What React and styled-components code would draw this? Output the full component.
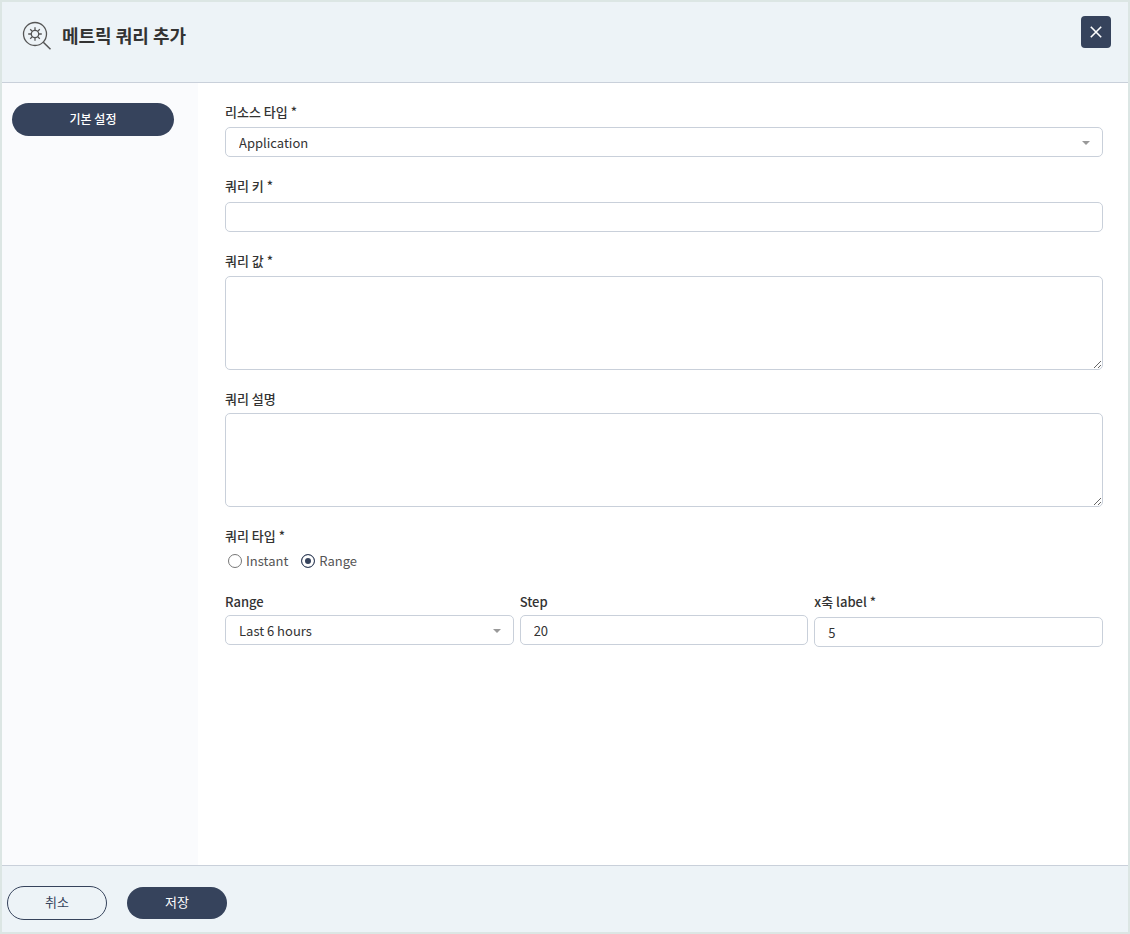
import React, { useState } from 'react'
import styled, { createGlobalStyle, ThemeProvider } from 'styled-components'

const theme = {
	color: {
		navy: '#36435c',
		text: '#333333',
		muted: '#555555',
		line: '#c9d0da',
		frame: '#dce6e4',
		bar: '#edf3f7',
		side: '#fafbfd',
		white: '#ffffff'
	}
}

const App = () => {
	const [queryType, setQueryType] = useState('Range')

	return (
		<ThemeProvider theme={theme}>
			<GlobalStyle />
			<Panel>
				<Header>
					<QueryIcon />
					<Title>메트릭 쿼리 추가</Title>
					<CloseButton type='button' aria-label='닫기'>
						<svg width='12' height='12' viewBox='0 0 12 12' fill='none' stroke='currentColor' strokeWidth='1.6'>
							<path d='M.8.8l10.4 10.4M11.2.8.8 11.2' />
						</svg>
					</CloseButton>
				</Header>
				<Body>
					<Sidebar>
						<TabButton type='button'>기본 설정</TabButton>
					</Sidebar>
					<Form id='query-form'>
						<Field $gap={5}>
							<Label htmlFor='resource'>리소스 타입 *</Label>
							<SelectBox>
								<Select id='resource' defaultValue='Application'>
									<option>Application</option>
								</Select>
								<Caret />
							</SelectBox>
						</Field>
						<Field $gap={6}>
							<Label htmlFor='key'>쿼리 키 *</Label>
							<Input id='key' />
						</Field>
						<Field $gap={5}>
							<Label htmlFor='value'>쿼리 값 *</Label>
							<TextArea id='value' />
						</Field>
						<Field $gap={4}>
							<Label htmlFor='description'>쿼리 설명</Label>
							<TextArea id='description' />
						</Field>
						<Field as='fieldset' $gap={5}>
							<Label as='legend'>쿼리 타입 *</Label>
							<Radios>
								{['Instant', 'Range'].map(type => (
									<RadioLabel key={type}>
										<Radio
											name='type'
											value={type}
											checked={queryType === type}
											onChange={() => setQueryType(type)}
										/>
										{type}
									</RadioLabel>
								))}
							</Radios>
						</Field>
						<Columns>
							<Field $gap={3}>
								<Label htmlFor='range'>Range</Label>
								<SelectBox>
									<Select id='range' defaultValue='Last 6 hours'>
										<option>Last 6 hours</option>
									</Select>
									<Caret />
								</SelectBox>
							</Field>
							<Field $gap={3}>
								<Label htmlFor='step'>Step</Label>
								<Input id='step' defaultValue='20' />
							</Field>
							<Field $gap={5}>
								<Label htmlFor='label'>x축 label *</Label>
								<Input id='label' defaultValue='5' />
							</Field>
						</Columns>
					</Form>
				</Body>
				<Footer>
					<CancelButton type='button'>취소</CancelButton>
					<SaveButton type='button'>저장</SaveButton>
				</Footer>
			</Panel>
		</ThemeProvider>
	)
}

const QueryIcon = () => (
	<svg width='30' height='30' viewBox='0 0 30 30' fill='none' stroke='#555555' strokeWidth='1.3'>
		<circle cx='13' cy='13' r='11.5' />
		<path d='M21.3 21.3l7.2 7' strokeWidth='1.5' />
		<circle cx='13' cy='13' r='3.7' />
		<path d='M13 6.2v3.1M13 16.7v3.1M6.2 13h3.1M16.7 13h3.1M8.2 8.2l2.2 2.2M15.6 15.6l2.2 2.2M17.8 8.2l-2.2 2.2M10.4 15.6l-2.2 2.2' />
	</svg>
)

const Caret = () => (
	<CaretIcon width='8' height='4' viewBox='0 0 8 4' aria-hidden='true'>
		<path d='M0 0h8L4 4z' fill='#999999' />
	</CaretIcon>
)

export default App

const GlobalStyle = createGlobalStyle`
	* {
		box-sizing: border-box;
	}

	body {
		color: ${props => props.theme.color.text};
		font-family: 'Noto Sans CJK KR', 'Noto Sans', sans-serif;
		font-size: 13px;
		margin: 0;
	}

	button, input, select, textarea {
		font-family: inherit;
	}
`

const Panel = styled.div`
	background: ${props => props.theme.color.white};
	border: 2px solid ${props => props.theme.color.frame};
	display: flex;
	flex-direction: column;
	min-height: 100vh;
`

const Header = styled.header`
	align-items: flex-start;
	background: ${props => props.theme.color.bar};
	border-bottom: 1px solid ${props => props.theme.color.line};
	display: flex;
	gap: 10px;
	padding: 14px 17px 31px 20px;

	> svg {
		margin-top: 5px;
	}
`

const Title = styled.h1`
	flex: 1;
	font-size: 18px;
	font-weight: 700;
	line-height: 26px;
	margin: 6px 0 0;
`

const CloseButton = styled.button`
	align-items: center;
	background: ${props => props.theme.color.navy};
	border: none;
	border-radius: 4px;
	color: ${props => props.theme.color.white};
	cursor: pointer;
	display: flex;
	height: 32px;
	justify-content: center;
	padding: 0;
	width: 30px;
`

const Body = styled.div`
	display: flex;
	flex: 1;
`

const Sidebar = styled.nav`
	background: ${props => props.theme.color.side};
	flex: none;
	padding: 20px 24px 20px 10px;
	width: 196px;
`

const PillButton = styled.button`
	background: ${props => props.theme.color.navy};
	border: none;
	border-radius: 17px;
	color: ${props => props.theme.color.white};
	cursor: pointer;
	padding: 0 0 3px;
`

const TabButton = styled(PillButton)`
	font-size: 12px;
	font-weight: 500;
	height: 33px;
	width: 100%;
`

const Form = styled.form`
	display: flex;
	flex: 1;
	flex-direction: column;
	gap: 19px;
	min-width: 0;
	padding: 19px 25px 20px 27px;
`

const Field = styled.div`
	border: none;
	display: flex;
	flex-direction: column;
	margin: 0;
	min-width: 0;
	padding: 0;

	> :first-child {
		margin-bottom: ${props => props.$gap}px;
	}
`

const Label = styled.label`
	font-size: 13px;
	font-weight: 500;
	line-height: 20px;
	padding: 0;
`

const Input = styled.input`
	background: ${props => props.theme.color.white};
	border: 1px solid ${props => props.theme.color.line};
	border-radius: 5px;
	color: ${props => props.theme.color.text};
	font-size: 13px;
	height: 30px;
	padding: 0 13px;
	width: 100%;
`

const TextArea = styled(Input).attrs({ as: 'textarea' })`
	display: block;
	height: 94px;
	padding: 6px 13px;
	resize: vertical;
`

const SelectBox = styled.div`
	position: relative;
`

const Select = styled(Input).attrs({ as: 'select' })`
	appearance: none;
	display: block;
`

const CaretIcon = styled.svg`
	pointer-events: none;
	position: absolute;
	right: 13px;
	top: 14px;
`

const Radios = styled.div`
	display: flex;
	gap: 13px;
	padding: 0 0 2px 3px;
`

const RadioLabel = styled.label`
	align-items: center;
	color: ${props => props.theme.color.muted};
	display: flex;
	gap: 4px;
	line-height: 20px;
`

const Radio = styled.input.attrs({ type: 'radio' })`
	appearance: none;
	border: 1px solid #777777;
	border-radius: 50%;
	height: 14px;
	margin: 0;
	width: 14px;

	&:checked {
		background: ${props => props.theme.color.navy};
		border-color: ${props => props.theme.color.navy};
		box-shadow: inset 0 0 0 3px ${props => props.theme.color.white};
	}
`

const Columns = styled.div`
	display: grid;
	gap: 6px;
	grid-template-columns: repeat(3, 1fr);
`

const Footer = styled.footer`
	align-items: center;
	background: ${props => props.theme.color.bar};
	border-top: 1px solid ${props => props.theme.color.line};
	display: flex;
	gap: 20px;
	padding: 20px 5px 12px;
`

const SaveButton = styled(PillButton)`
	font-size: 13px;
	height: 32px;
	width: 100px;
`

const CancelButton = styled(SaveButton)`
	background: transparent;
	border: 1px solid ${props => props.theme.color.navy};
	color: ${props => props.theme.color.navy};
	height: 34px;
`
